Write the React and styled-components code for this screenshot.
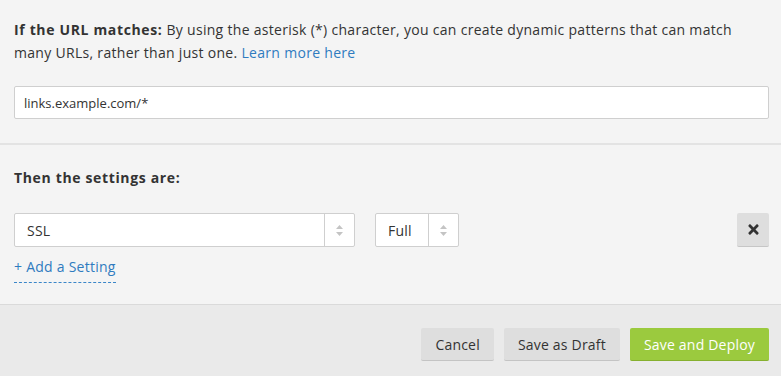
import React from "react";
import styled, { createGlobalStyle } from "styled-components";
import { FaTimes } from "react-icons/fa";

const Global = createGlobalStyle`
  html, body { margin: 0; padding: 0; background: #f4f4f4; }
  body { font-family: "Open Sans", "Liberation Sans", sans-serif; color: #333; }
  * { box-sizing: border-box; }
`;

const Page = styled.div`
  width: 781px;
  height: 376px;
  overflow: hidden;
  background: #f4f4f4;
  display: flex;
  flex-direction: column;
`;

const Section = styled.section`
  padding: ${(p) => p.$pad};
  border-bottom: ${(p) => (p.$divider ? "2px solid #e3e3e3" : "none")};
`;

const Para = styled.p`
  margin: 0;
  font-size: 14px;
  line-height: 23px;
  letter-spacing: 0.3px;
  color: #333;
`;

const Strong = styled.strong`
  font-weight: 700;
  letter-spacing: 0.65px;
`;

const Link = styled.a`
  color: #2f7bbf;
  text-decoration: none;
`;

const TextInput = styled.input`
  display: block;
  width: 100%;
  height: 33px;
  margin-top: 22px;
  padding: 0 9px;
  border: 1px solid #cfcfcf;
  border-radius: 2px;
  background: #fff;
  font-family: inherit;
  font-size: 13px;
  color: #333;
  outline: none;
`;

const Heading = styled.h3`
  margin: 0;
  font-size: 14px;
  line-height: 23px;
  font-weight: 700;
  letter-spacing: 0.65px;
  color: #333;
`;

const SettingRow = styled.div`
  display: flex;
  align-items: center;
  margin-top: 24px;
`;

const Select = styled.div`
  display: flex;
  width: ${(p) => p.$width}px;
  height: 34px;
  margin-right: ${(p) => p.$gap || 0}px;
  border: 1px solid #cfcfcf;
  border-radius: 2px;
  background: #fff;
`;

const SelectValue = styled.div`
  flex: 1;
  display: flex;
  align-items: center;
  padding-left: ${(p) => p.$pad}px;
  font-size: 14px;
  letter-spacing: 0.2px;
  color: #333;
`;

const SelectArrows = styled.div`
  width: 30px;
  border-left: 1px solid #cfcfcf;
  display: flex;
  align-items: center;
  justify-content: center;
`;

const Spacer = styled.div`
  flex: 1;
`;

const RemoveButton = styled.button`
  width: 32px;
  height: 34px;
  border: none;
  border-bottom: 1px solid #c6c6c6;
  border-radius: 2px;
  background: #dedede;
  color: #333;
  display: flex;
  align-items: center;
  justify-content: center;
  padding: 0;
`;

const AddLink = styled.a`
  display: inline-block;
  margin-top: 10px;
  font-size: 14px;
  line-height: 20px;
  letter-spacing: 0.25px;
  color: #2f7bbf;
  text-decoration: none;
  border-bottom: 1px dashed #3a86c8;
  padding-bottom: 5px;
`;

const Footer = styled.footer`
  flex: 1;
  background: #eaeaea;
  border-top: 1px solid #dadada;
  display: flex;
  justify-content: flex-end;
  align-items: flex-start;
  gap: 10px;
  padding: 23px 12px 0 0;
`;

const Button = styled.button`
  height: 33px;
  padding: 0 ${(p) => p.$px}px;
  border: none;
  border-bottom: 1px solid ${(p) => (p.$primary ? "#86b02f" : "#c4c4c4")};
  border-radius: 2px;
  background: ${(p) => (p.$primary ? "#9bca3e" : "#dedede")};
  color: ${(p) => (p.$primary ? "#fff" : "#333")};
  font-family: inherit;
  font-size: 14px;
  letter-spacing: 0.2px;
`;

const Arrows = () => (
  <svg width="9" height="13" viewBox="0 0 9 13">
    <path d="M4.5 1 L8 5 L1 5 Z" fill="#c4c4c4" />
    <path d="M4.5 12 L8 8 L1 8 Z" fill="#c4c4c4" />
  </svg>
);

export default function App() {
  return (
    <Page>
      <Global />
      <Section $pad="18px 12px 24px 14px" $divider>
        <Para>
          <Strong>If the URL matches:</Strong> By using the asterisk (*) character, you can create
          dynamic patterns that can match many URLs, rather than just one.{" "}
          <Link href="#">Learn more here</Link>
        </Para>
        <TextInput defaultValue="links.example.com/*" />
      </Section>
      <Section $pad="21px 12px 21px 14px">
        <Heading>Then the settings are:</Heading>
        <SettingRow>
          <Select $width={341} $gap={20}>
            <SelectValue $pad={12}>SSL</SelectValue>
            <SelectArrows>
              <Arrows />
            </SelectArrows>
          </Select>
          <Select $width={84}>
            <SelectValue $pad={12}>Full</SelectValue>
            <SelectArrows>
              <Arrows />
            </SelectArrows>
          </Select>
          <Spacer />
          <RemoveButton>
            <FaTimes size={15} />
          </RemoveButton>
        </SettingRow>
        <AddLink href="#">+ Add a Setting</AddLink>
      </Section>
      <Footer>
        <Button $px={14}>Cancel</Button>
        <Button $px={14}>Save as Draft</Button>
        <Button $px={14} $primary>Save and Deploy</Button>
      </Footer>
    </Page>
  );
}
